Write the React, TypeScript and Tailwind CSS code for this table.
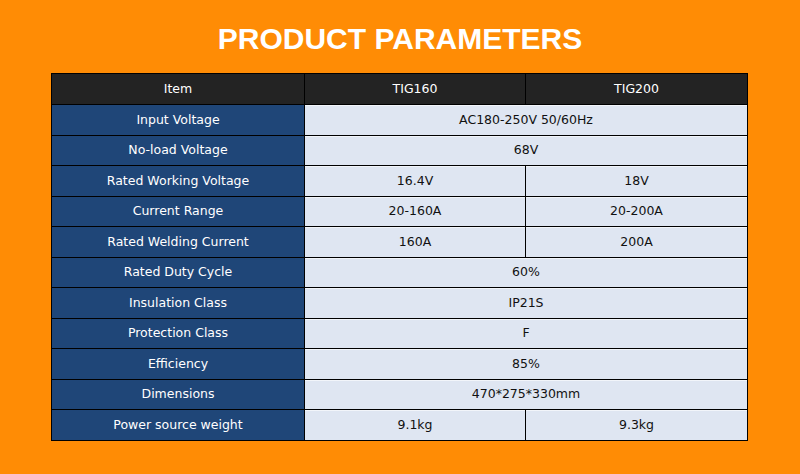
import React from "react";

type Row = { label: string; values: string[] };

const rows: Row[] = [
  { label: "Input Voltage", values: ["AC180-250V 50/60Hz"] },
  { label: "No-load Voltage", values: ["68V"] },
  { label: "Rated Working Voltage", values: ["16.4V", "18V"] },
  { label: "Current Range", values: ["20-160A", "20-200A"] },
  { label: "Rated Welding Current", values: ["160A", "200A"] },
  { label: "Rated Duty Cycle", values: ["60%"] },
  { label: "Insulation Class", values: ["IP21S"] },
  { label: "Protection Class", values: ["F"] },
  { label: "Efficiency", values: ["85%"] },
  { label: "Dimensions", values: ["470*275*330mm"] },
  { label: "Power source weight", values: ["9.1kg", "9.3kg"] },
];

const App = () => {
  return (
    <div className="w-[800px] h-[474px] bg-[#ff8c05] flex flex-col">
      <h1
        className="self-center text-white font-bold text-[30px] leading-none mt-[24px] h-[49px]"
        style={{ fontFamily: '"Liberation Sans", Arial, sans-serif' }}
      >
        PRODUCT PARAMETERS
      </h1>
      <table
        className="ml-[51px] w-[697px] border-collapse border border-black text-[12.5px]"
        style={{ fontFamily: '"DejaVu Sans", Verdana, sans-serif' }}
      >
        <thead>
          <tr className="h-[31px]">
            <th className="w-[253px] pt-[1px] bg-[#232323] text-white font-normal border border-black">
              Item
            </th>
            <th className="w-[221px] pt-[1px] bg-[#232323] text-white font-normal border border-black">
              TIG160
            </th>
            <th className="pt-[1px] bg-[#232323] text-white font-normal border border-black">
              TIG200
            </th>
          </tr>
        </thead>
        <tbody>
          {rows.map((r, idx) => (
            <tr key={idx} className="h-[30.5px]">
              <td className="pt-[1px] bg-[#1f4678] text-white text-center border border-black">
                {r.label}
              </td>
              {r.values.length === 1 ? (
                <td
                  colSpan={2}
                  className="pt-[1px] bg-[#dfe6f2] text-[#111] text-center border border-black shadow-[inset_0_1px_0_#f2f5fa]"
                >
                  {r.values[0]}
                </td>
              ) : (
                r.values.map((v, i) => (
                  <td
                    key={i}
                    className="pt-[1px] bg-[#dfe6f2] text-[#111] text-center border border-black shadow-[inset_0_1px_0_#f2f5fa]"
                  >
                    {v}
                  </td>
                ))
              )}
            </tr>
          ))}
        </tbody>
      </table>
    </div>
  );
};

export default App;
